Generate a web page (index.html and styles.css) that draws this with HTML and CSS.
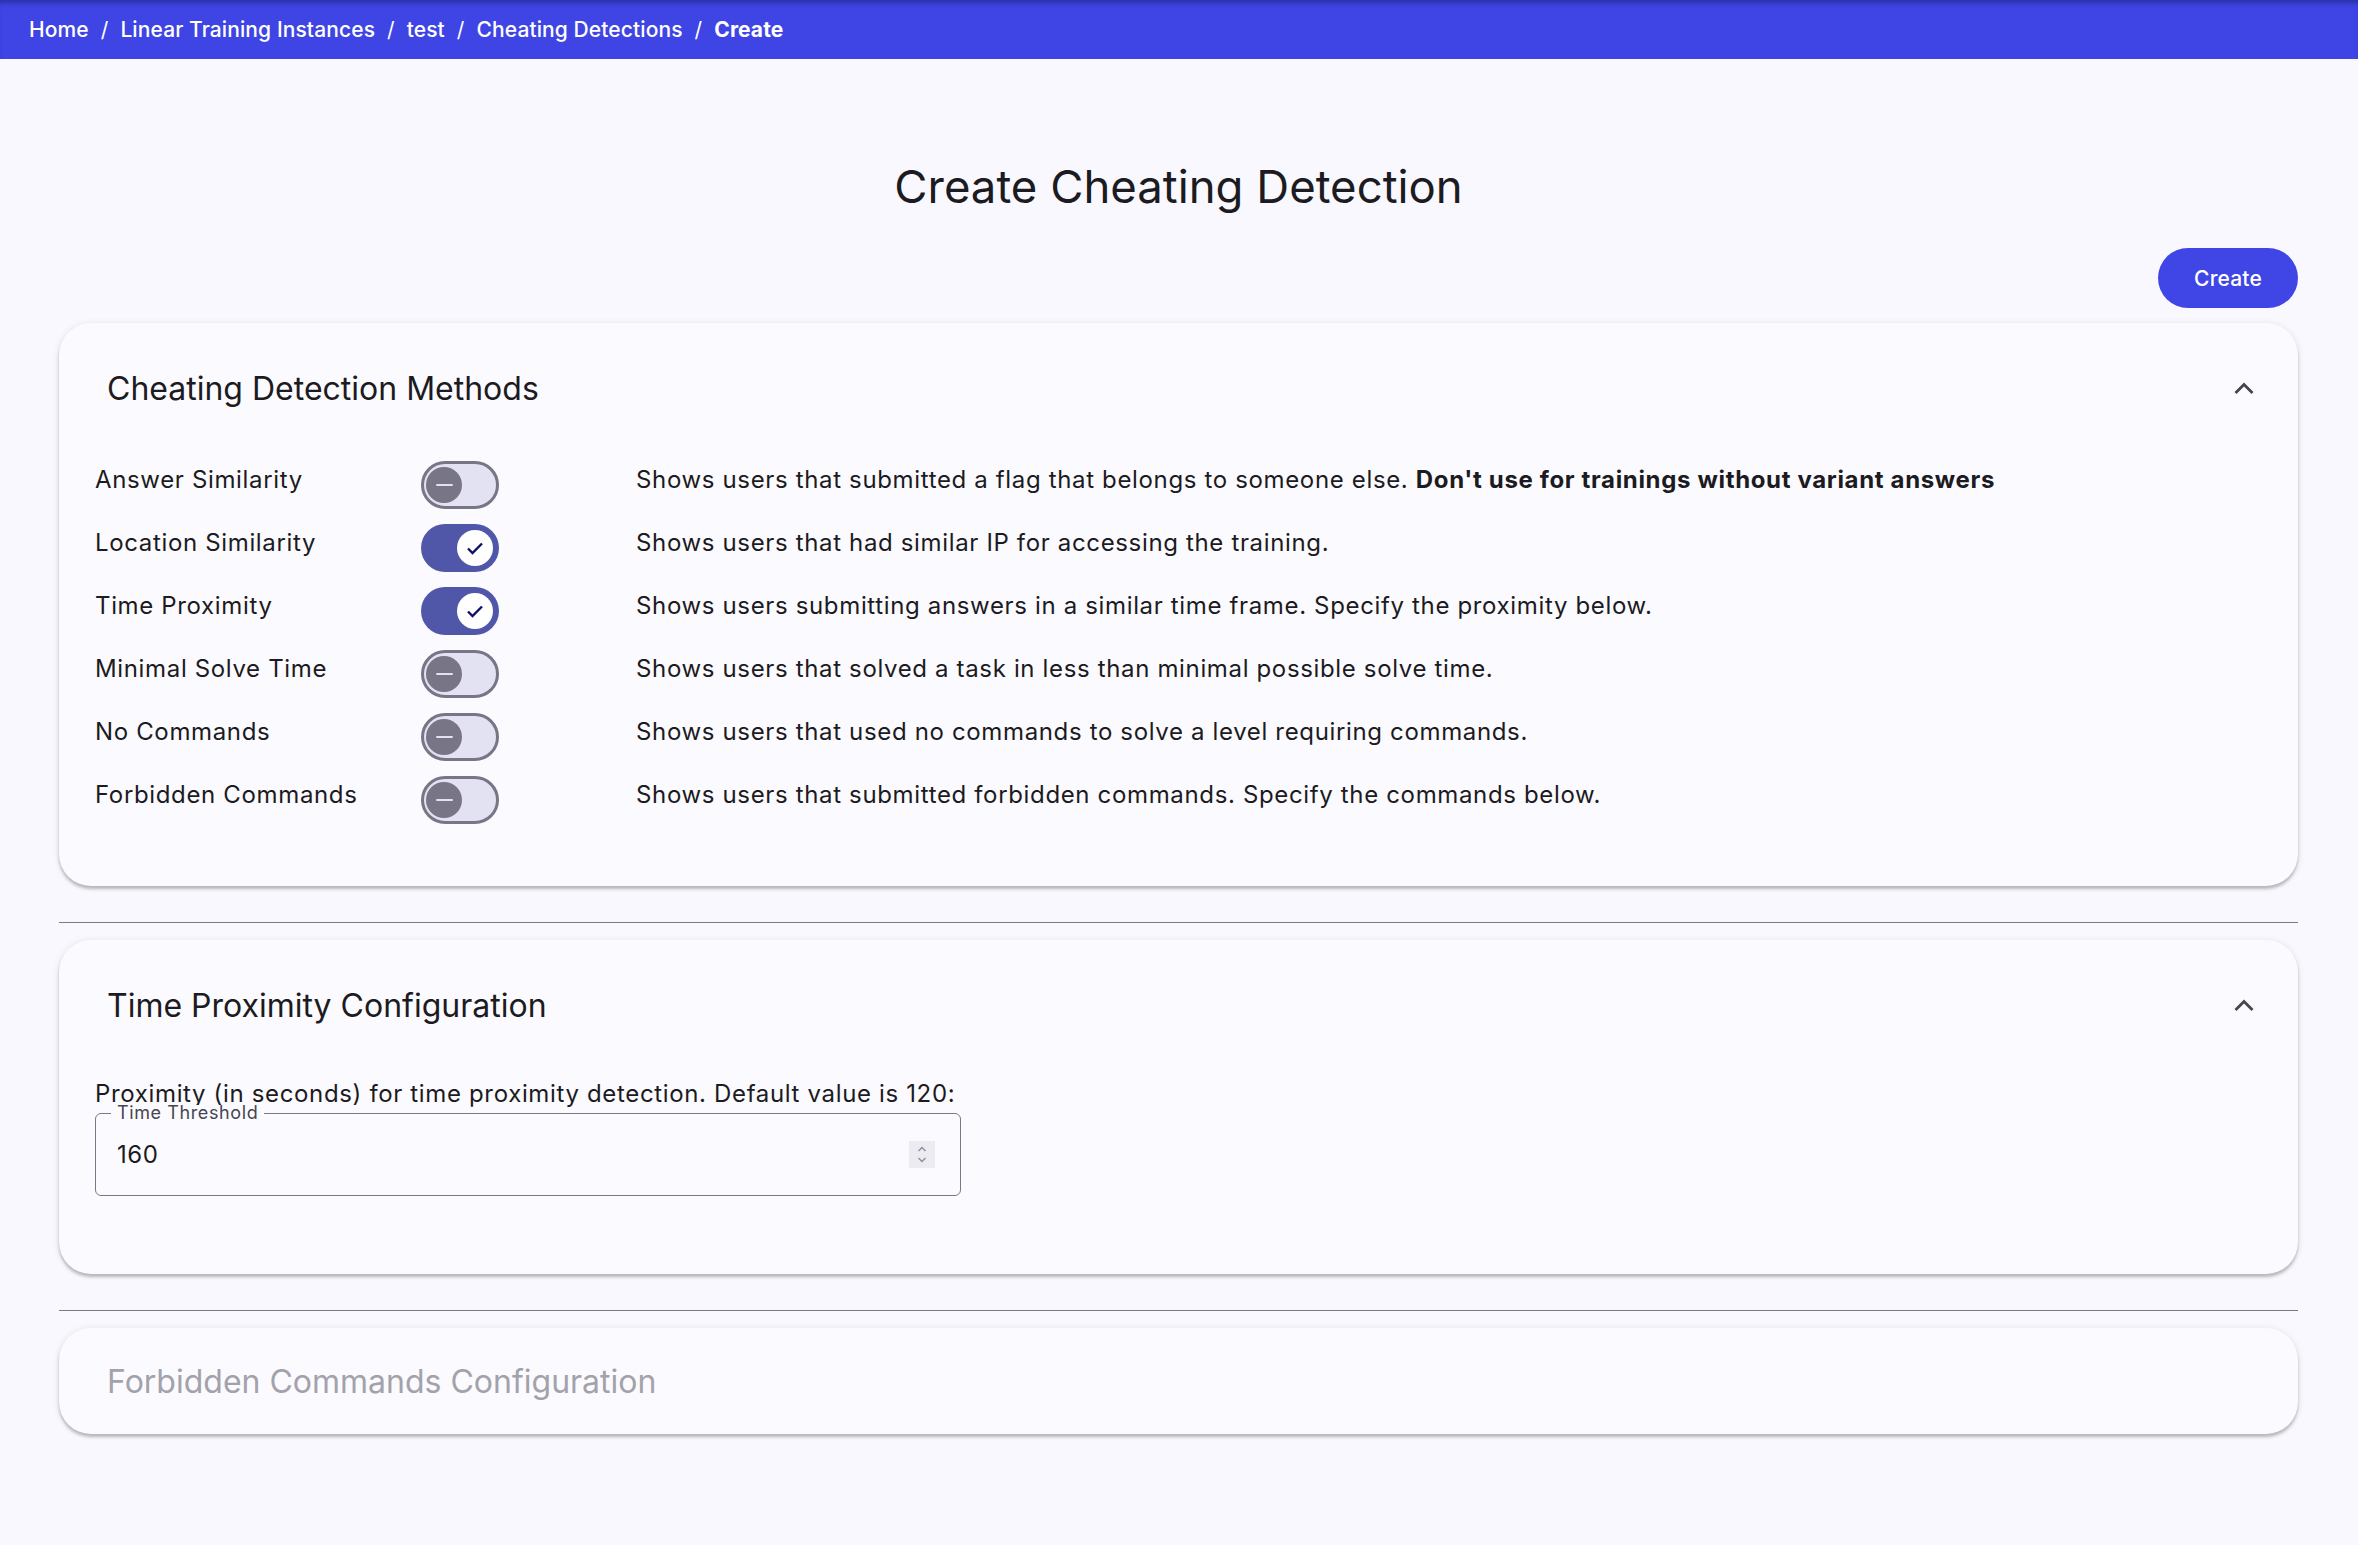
FILE: index.html
```html
<!DOCTYPE html>
<html lang="en">
<head>
<meta charset="utf-8">
<title>Create Cheating Detection</title>
<link rel="stylesheet" href="styles.css">
</head>
<body>
<header class="topbar">
  <nav class="crumbs">
    <a class="crumb">Home</a><span class="sep">/</span>
    <a class="crumb">Linear Training Instances</a><span class="sep">/</span>
    <a class="crumb">test</a><span class="sep">/</span>
    <a class="crumb">Cheating Detections</a><span class="sep">/</span>
    <span class="crumb current">Create</span>
  </nav>
</header>

<main class="page">
  <h1 class="page-title">Create Cheating Detection</h1>
  <div class="actions">
    <button class="btn-create">Create</button>
  </div>

  <section class="card">
    <div class="card-header">
      <h2 class="card-title">Cheating Detection Methods</h2>
      <svg class="chevron" width="24" height="24" viewBox="0 0 24 24"><path d="M4.5 16 L12 8.5 L19.5 16" fill="none" stroke="#46454f" stroke-width="2.8" stroke-linecap="square"/></svg>
    </div>
    <div class="methods">
      <div class="method">
        <span class="m-label">Answer Similarity</span>
        <span class="switch off"><span class="handle"><span class="minus"></span></span></span>
        <span class="m-desc">Shows users that submitted a flag that belongs to someone else. <b>Don't use for trainings without variant answers</b></span>
      </div>
      <div class="method">
        <span class="m-label">Location Similarity</span>
        <span class="switch on"><span class="handle"><svg width="36" height="36" viewBox="0 0 36 36"><path d="M11 18.5 L15.5 23 L25 13.5" fill="none" stroke="#0d1166" stroke-width="2.4"/></svg></span></span>
        <span class="m-desc">Shows users that had similar IP for accessing the training.</span>
      </div>
      <div class="method">
        <span class="m-label">Time Proximity</span>
        <span class="switch on"><span class="handle"><svg width="36" height="36" viewBox="0 0 36 36"><path d="M11 18.5 L15.5 23 L25 13.5" fill="none" stroke="#0d1166" stroke-width="2.4"/></svg></span></span>
        <span class="m-desc">Shows users submitting answers in a similar time frame. Specify the proximity below.</span>
      </div>
      <div class="method">
        <span class="m-label">Minimal Solve Time</span>
        <span class="switch off"><span class="handle"><span class="minus"></span></span></span>
        <span class="m-desc">Shows users that solved a task in less than minimal possible solve time.</span>
      </div>
      <div class="method">
        <span class="m-label">No Commands</span>
        <span class="switch off"><span class="handle"><span class="minus"></span></span></span>
        <span class="m-desc">Shows users that used no commands to solve a level requiring commands.</span>
      </div>
      <div class="method">
        <span class="m-label">Forbidden Commands</span>
        <span class="switch off"><span class="handle"><span class="minus"></span></span></span>
        <span class="m-desc">Shows users that submitted forbidden commands. Specify the commands below.</span>
      </div>
    </div>
  </section>

  <hr class="divider">

  <section class="card">
    <div class="card-header">
      <h2 class="card-title">Time Proximity Configuration</h2>
      <svg class="chevron" width="24" height="24" viewBox="0 0 24 24"><path d="M4.5 16 L12 8.5 L19.5 16" fill="none" stroke="#46454f" stroke-width="2.8" stroke-linecap="square"/></svg>
    </div>
    <div class="config">
      <p class="config-text">Proximity (in seconds) for time proximity detection. Default value is 120:</p>
      <div class="field">
        <span class="field-label">Time Threshold</span>
        <input class="field-input" type="text" value="160">
        <span class="spinner">
          <svg width="26" height="27" viewBox="0 0 26 27"><path d="M9.5 10 L13 6.5 L16.5 10" fill="none" stroke="#8e8d98" stroke-width="1.4"/><path d="M9.5 17 L13 20.5 L16.5 17" fill="none" stroke="#8e8d98" stroke-width="1.4"/></svg>
        </span>
      </div>
    </div>
  </section>

  <hr class="divider">

  <section class="card collapsed">
    <div class="card-header short">
      <h2 class="card-title disabled">Forbidden Commands Configuration</h2>
    </div>
  </section>
</main>
</body>
</html>
```

FILE: styles.css
```css
* { box-sizing: border-box; }

body {
  margin: 0;
  background: #f9f8fe;
  font-family: Inter, "Noto Sans", sans-serif;
  color: #1b1b21;
}

.topbar {
  height: 59px;
  background: #3f45e5;
  box-shadow: inset 0 6px 6px -4px rgba(20, 20, 90, 0.55);
  display: flex;
  align-items: center;
  padding-left: 29px;
}

.crumbs {
  display: flex;
  align-items: center;
  font-size: 21px;
  font-weight: 500;
  color: #ffffff;
  letter-spacing: 0.1px;
}

.crumb { color: #ffffff; text-decoration: none; }
.crumb.current { font-weight: 700; }
.sep { padding: 0 12px; font-weight: 400; }

.page {
  padding: 0 60px 80px 59px;
}

.page-title {
  margin: 96px 0 0;
  text-align: center;
  font-size: 45.5px;
  line-height: 64px;
  font-weight: 400;
  color: #1b1b21;
}

.actions {
  display: flex;
  justify-content: flex-end;
  margin-top: 29px;
}

.btn-create {
  width: 140px;
  height: 60px;
  border: none;
  border-radius: 30px;
  background: #4046e6;
  color: #ffffff;
  font-family: Inter, sans-serif;
  font-size: 21px;
  font-weight: 500;
  letter-spacing: 0.15px;
}

.card {
  margin-top: 15px;
  background: #fbfaff;
  border-radius: 32px;
  box-shadow: 0 3px 3px rgba(0, 0, 0, 0.22), 0 1px 6px 1px rgba(0, 0, 0, 0.08);
}

.divider + .card { margin-top: 17px; }

.card-header {
  height: 130px;
  display: flex;
  align-items: center;
  justify-content: space-between;
  padding: 0 42px 0 48px;
}

.card-header.short { height: 106px; }

.card-title {
  margin: 0;
  font-size: 32px;
  font-weight: 400;
  color: #1b1b21;
}

.card-title.disabled { color: #a3a2ab; }

.chevron { display: block; }

.methods {
  padding: 0 36px 55px;
}

.method {
  display: grid;
  grid-template-columns: 326px 215px 1fr;
  align-items: start;
  height: 63px;
  font-size: 24px;
  line-height: 36px;
  letter-spacing: 0.65px;
}

.m-label, .m-desc { margin-top: 8.5px; }
.m-desc b { font-weight: 700; }

.switch {
  margin-top: 8px;
  width: 78px;
  height: 48px;
  border-radius: 24px;
  display: flex;
  align-items: center;
}

.switch.off {
  background: #e3e2f2;
  border: 3px solid #787586;
  padding-left: 2px;
}

.switch.on {
  background: #5157a8;
  justify-content: flex-end;
  padding-right: 6px;
}

.handle {
  width: 36px;
  height: 36px;
  border-radius: 50%;
  display: flex;
  align-items: center;
  justify-content: center;
}

.off .handle { background: #787586; }
.on .handle { background: #ffffff; }

.minus {
  width: 17px;
  height: 2.5px;
  background: #e3e1ec;
  border-radius: 1px;
}

.divider {
  margin: 36px 0 0;
  border: none;
  height: 1px;
  background: #7a7989;
}

.config {
  padding: 13px 36px 78px;
}

.config-text {
  margin: 0;
  font-size: 24px;
  line-height: 22px;
  letter-spacing: 0.65px;
}

.field {
  position: relative;
  margin-top: 8px;
  width: 866px;
  height: 83px;
  border: 1.5px solid #7a7989;
  border-radius: 6px;
  display: flex;
  align-items: center;
  padding: 0 25px 0 21px;
}

.field-label {
  position: absolute;
  top: -9px;
  left: 15px;
  padding: 0 6px;
  background: #fbfaff;
  font-size: 18px;
  line-height: 16px;
  color: #46464f;
  letter-spacing: 0.6px;
}

.field-input {
  flex: 1;
  border: none;
  background: transparent;
  outline: none;
  font-family: Inter, sans-serif;
  font-size: 24px;
  color: #1b1b21;
  padding: 0;
  letter-spacing: 0.5px;
}

.spinner {
  width: 26px;
  height: 27px;
  background: #ebebf1;
  display: block;
}

.spinner svg { display: block; }
```
